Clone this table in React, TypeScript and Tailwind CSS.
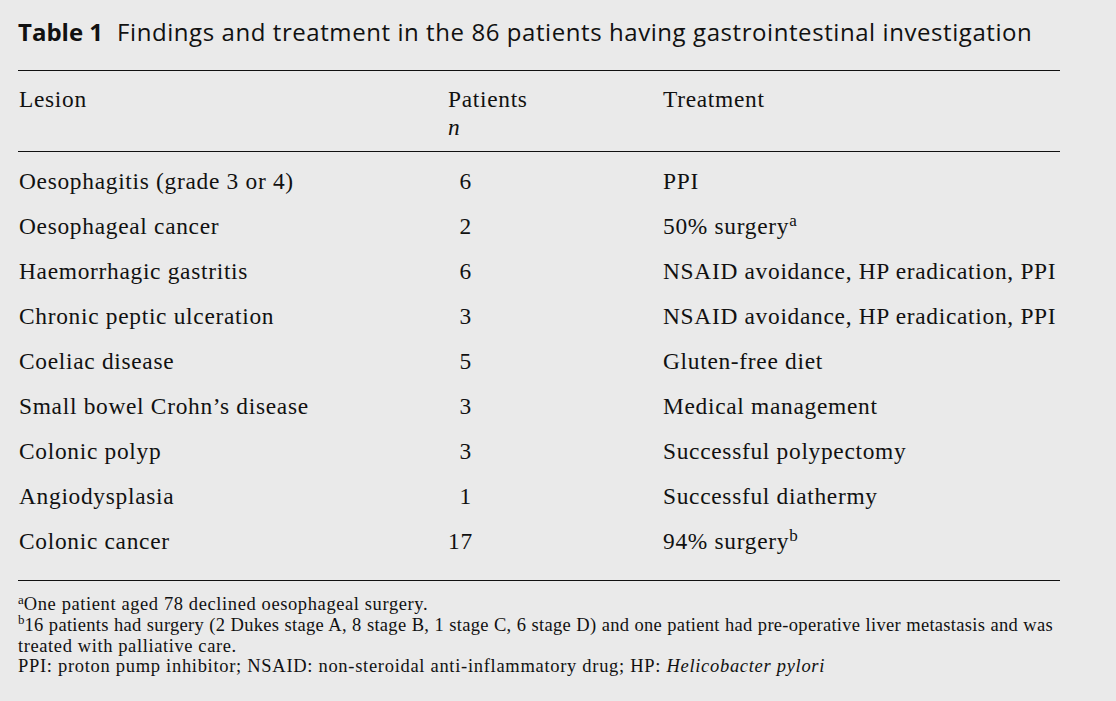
import React from "react";

const rows: [string, string, React.ReactNode][] = [
  ["Oesophagitis (grade 3 or 4)", "6", "PPI"],
  ["Oesophageal cancer", "2", <>50% surgery<sup className="text-[17px] tracking-normal">a</sup></>],
  ["Haemorrhagic gastritis", "6", "NSAID avoidance, HP eradication, PPI"],
  ["Chronic peptic ulceration", "3", "NSAID avoidance, HP eradication, PPI"],
  ["Coeliac disease", "5", "Gluten-free diet"],
  ["Small bowel Crohn\u2019s disease", "3", "Medical management"],
  ["Colonic polyp", "3", "Successful polypectomy"],
  ["Angiodysplasia", "1", "Successful diathermy"],
  ["Colonic cancer", "17", <>94% surgery<sup className="text-[17px] tracking-normal">b</sup></>],
];

export default function App() {
  return (
    <div className="w-[1116px] h-[701px] bg-[#eaeaea] text-[#111] pl-[18px] pr-[56px] overflow-hidden">
      <div className="pt-[17px] h-[70px] text-[24px] leading-[30px] font-['Open_Sans',sans-serif] whitespace-nowrap">
        <span className="font-bold">Table 1</span>
        <span className="ml-[14px] tracking-[0.57px]">Findings and treatment in the 86 patients having gastrointestinal investigation</span>
      </div>
      <div className="h-px bg-[#111]" />
      <div className="font-['Liberation_Serif',serif] text-[23.4px] tracking-[0.7px]">
        <div className="grid grid-cols-[430px_215px_1fr] pt-[14px] pb-[10px] leading-[28px]">
          <div className="pl-px">Lesion</div>
          <div>
            <div>Patients</div>
            <div className="italic">n</div>
          </div>
          <div>Treatment</div>
        </div>
        <div className="h-px bg-[#111]" />
        <div className="pt-[7px] pb-[16px]">
          {rows.map(([lesion, n, t], i) => (
            <div key={i} className="grid grid-cols-[430px_215px_1fr] h-[45px] leading-[45px] whitespace-nowrap">
              <div className="pl-px">{lesion}</div>
              <div className="w-[24px] text-right">{n}</div>
              <div>{t}</div>
            </div>
          ))}
        </div>
        <div className="h-px bg-[#111]" />
        <div className="pt-[13px] text-[18.5px] leading-[20.8px] tracking-[0.6px]">
          <div className="whitespace-nowrap"><sup className="text-[13px] tracking-normal">a</sup>One patient aged 78 declined oesophageal surgery.</div>
          <div className="w-[1035px] text-justify [text-align-last:justify] tracking-[0.3px]"><sup className="text-[13px] tracking-normal">b</sup>16 patients had surgery (2 Dukes stage A, 8 stage B, 1 stage C, 6 stage D) and one patient had pre-operative liver metastasis and was</div>
          <div className="whitespace-nowrap">treated with palliative care.</div>
          <div className="whitespace-nowrap tracking-[0.7px]">PPI: proton pump inhibitor; NSAID: non-steroidal anti-inflammatory drug; HP: <i>Helicobacter pylori</i></div>
        </div>
      </div>
    </div>
  );
}
